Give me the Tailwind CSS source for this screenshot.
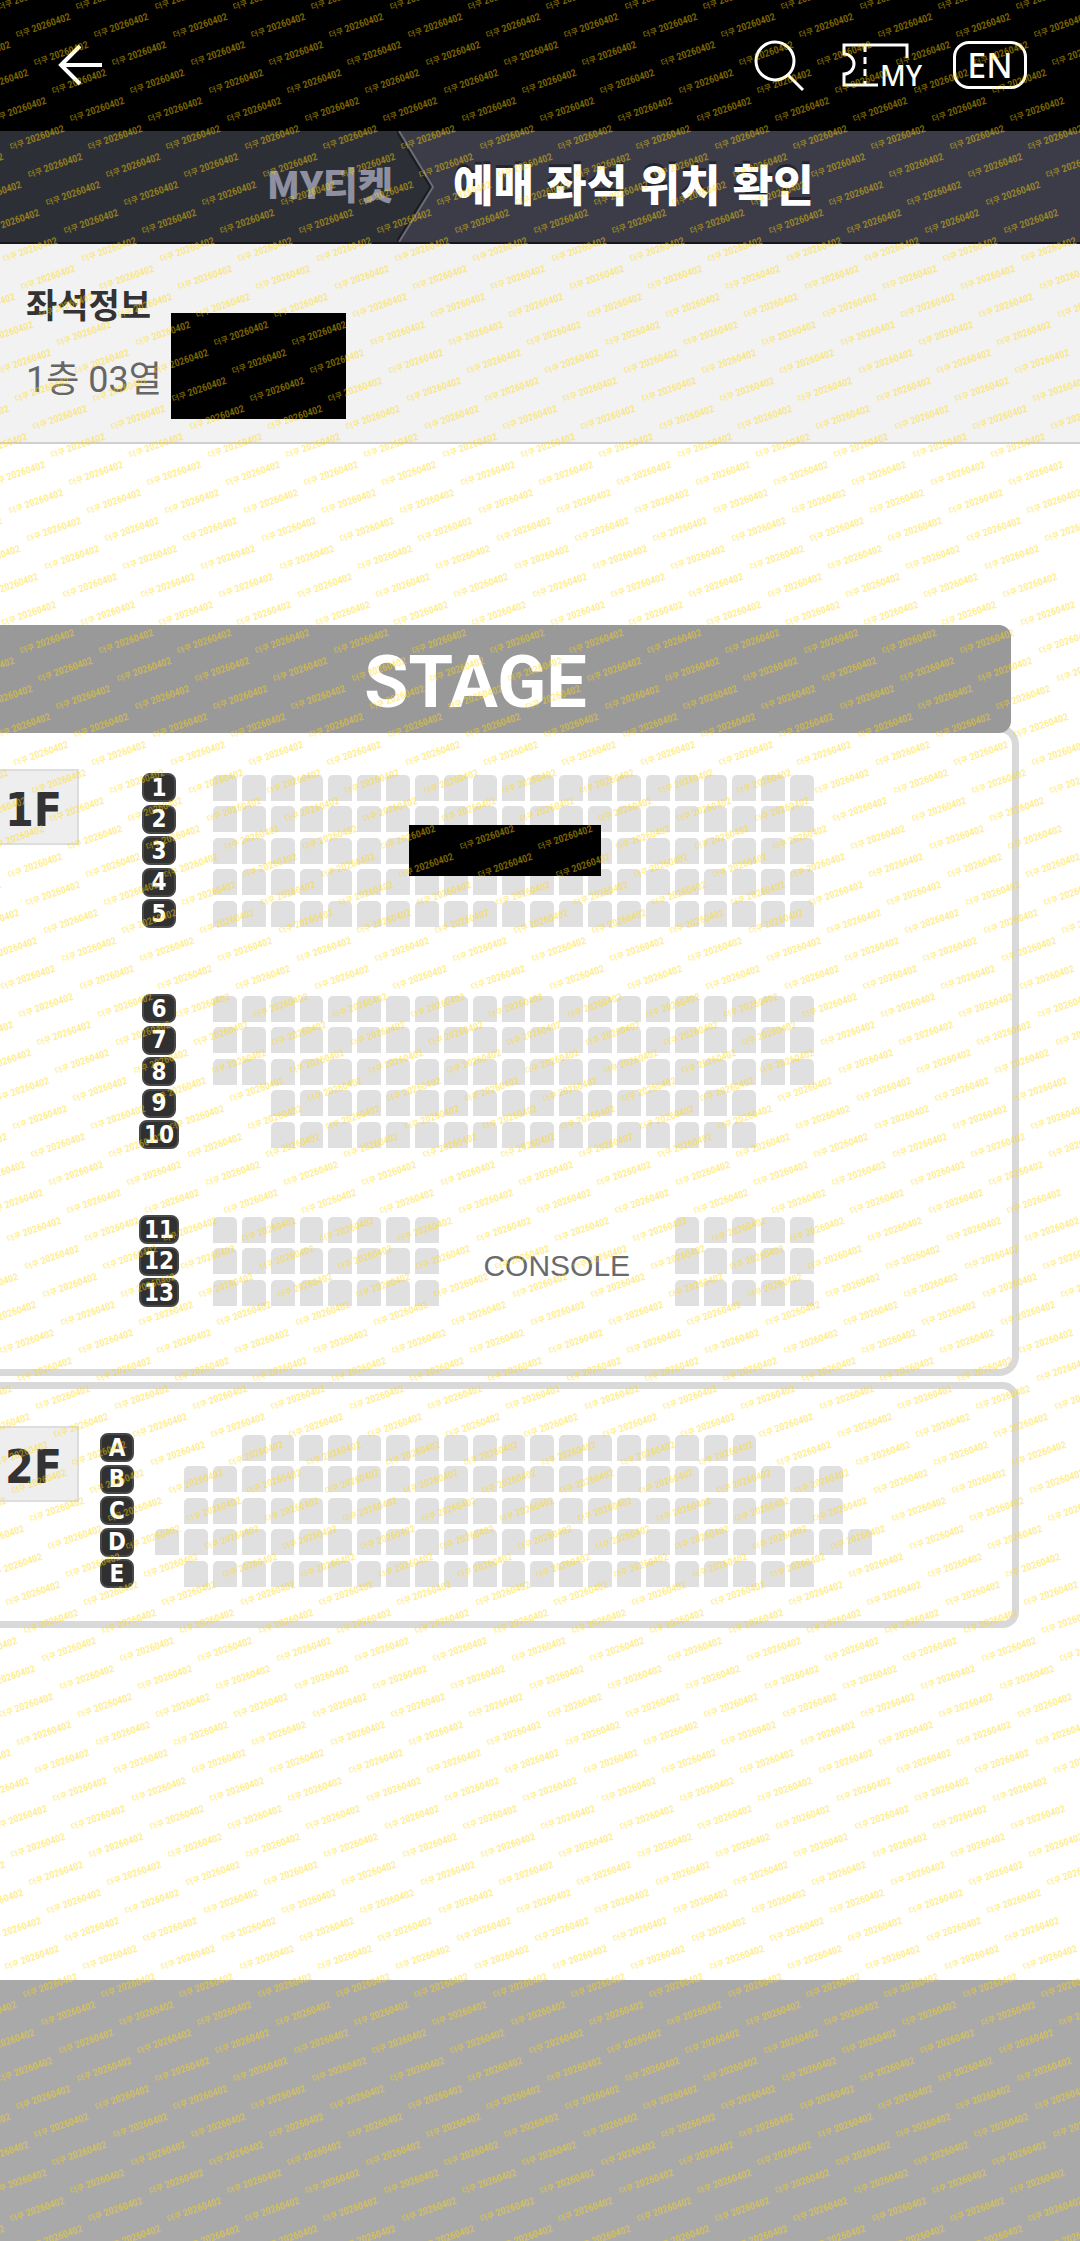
<!DOCTYPE html>
<html lang="ko">
<head>
  <meta charset="UTF-8" />
  <meta name="viewport" content="width=device-width, initial-scale=1.0"/>
  <title>예매 좌석 위치 확인</title>
  <script src="https://cdn.jsdelivr.net/npm/@tailwindcss/browser@4"></script>
</head>
<body class="relative min-h-screen flex flex-col overflow-x-hidden bg-white font-['Roboto','Noto_Sans_CJK_KR',sans-serif]">
  <header class="flex h-[131px] items-center justify-between bg-black pr-[53px] pb-[2px] pl-[56px] text-white">
    <button type="button" aria-label="뒤로">
      <svg class="h-[44px] w-[48px]" viewBox="0 0 48 44" fill="none" stroke="currentColor" stroke-width="4">
        <path d="M46 22H5M24 3 5 22l19 19" />
      </svg>
    </button>
    <div class="flex items-center">
      <button type="button" aria-label="검색">
        <svg class="h-[54px] w-[54px]" viewBox="0 0 54 54" fill="none" stroke="currentColor" stroke-width="3">
          <circle cx="21" cy="23" r="19" />
          <path d="M34 37l15 15" />
        </svg>
      </button>
      <a href="#" aria-label="MY 티켓" class="ml-[34px]">
        <svg class="h-[48px] w-[82px]" viewBox="0 0 82 48" fill="none" stroke="currentColor" stroke-width="3">
          <path d="M65 17V4H2v9a10 10 0 0 1 0 20v11h34" />
          <path d="M23 4v40" stroke-dasharray="7 5" />
          <text x="38" y="45" fill="currentColor" stroke="none" font-family="Noto Sans" font-size="28" font-weight="500">MY</text>
        </svg>
      </a>
      <button type="button" class="ml-[29px] flex h-[48px] w-[74px] items-center justify-center rounded-2xl border-3 border-white font-['Noto_Sans'] text-[34px] leading-none font-medium">EN</button>
    </div>
  </header>

  <nav class="relative flex h-[113px] items-center border-b-2 border-[#16161c] bg-[#2d2f36] font-['Noto_Sans_CJK_KR',sans-serif]">
    <a href="#" class="w-[397px] shrink-0 pr-[4px] pb-[8px] text-right text-[38px] leading-none font-black text-[#8e8fa0]">MY티켓</a>
    <svg class="h-full w-[38px] shrink-0" viewBox="0 0 38 111" preserveAspectRatio="none">
      <path d="M1 0 36 56 1 111h37V0z" fill="#3b3c48" />
      <path d="M0 0 34 56 0 111" fill="none" stroke="#1c1d22" stroke-width="3" />
      <path d="M2 0 36 56 2 111" fill="none" stroke="#6b6c76" stroke-width="2" />
    </svg>
    <h1 class="flex h-full flex-1 items-center bg-[#3b3c48] pb-[8px] pl-[18px] text-[44px] leading-none font-black text-white text-shadow-[0_-3px_0_#25262d]">예매 좌석 위치 확인</h1>
  </nav>

  <section class="flex h-[200px] items-start border-b-2 border-[#cfcfcf] bg-[#f2f2f2] pl-[26px]">
    <div class="w-[145px] pt-[38px] whitespace-nowrap">
      <h2 class="text-[34px] leading-[48px] font-bold text-[#333]">좌석정보</h2>
      <p class="mt-[26px] text-[36px] leading-[48px] text-[#666]">1층 03열</p>
    </div>
    <div class="mt-[69px] h-[106px] w-[175px] bg-black"></div>
  </section>

  <main class="flex-1 pt-[181px] pr-[61px] pb-[352px]">
    <div class="relative z-10 mr-[8px] flex h-[108px] items-center justify-center rounded-r-xl bg-[#999] pt-[8px] pr-[60px] text-[72px] leading-none font-bold text-white">STAGE</div>

    <section class="-mt-[8px] flex items-start rounded-r-[20px] border-[7px] border-l-0 border-[#d9d9d9] pt-[40px] pb-[61px]">
      <h2 class="-mt-[3px] w-[79px] border-2 border-l-0 border-[#ddd] bg-[#eee] pt-[6px] pr-[10px] text-center font-['DejaVu_Sans_Condensed','DejaVu_Sans',sans-serif] text-[46px] leading-[66px] font-bold text-[#333]">1F</h2>
      <div class="relative mr-[198px] ml-[60px] flex-1">
        <div id="floor1" class="flex flex-col gap-[64px]"></div>
        <div class="absolute top-[53px] left-[270px] h-[51px] w-[192px] bg-black"></div>
      </div>
    </section>

    <section class="mt-[6px] flex items-start rounded-r-[16px] border-[7px] border-l-0 border-[#d9d9d9] pt-[43px] pb-[32px]">
      <h2 class="-mt-[6px] w-[79px] border-2 border-l-0 border-[#ddd] bg-[#eee] pt-[6px] pr-[10px] text-center font-['DejaVu_Sans_Condensed','DejaVu_Sans',sans-serif] text-[46px] leading-[66px] font-bold text-[#333]">2F</h2>
      <div id="floor2" class="mr-[140px] ml-[21px] flex-1"></div>
    </section>
  </main>

  <footer class="h-[261px] bg-[#a9a9a9]"></footer>

  <svg id="watermark" aria-hidden="true" class="pointer-events-none absolute inset-0 z-20 h-full w-full fill-[#ffd800]/50 font-['Liberation_Sans_Narrow','Roboto_Condensed','Open_Sans_Condensed','Noto_Sans_CJK_KR',sans-serif] text-[8px] font-medium"></svg>

  <script>
    // each row: label, then [first, last] seat column ranges
    const floor1 = [
      [["1", [1, 21]], ["2", [1, 21]], ["3", [1, 21]], ["4", [1, 21]], ["5", [1, 21]]],
      [["6", [1, 21]], ["7", [1, 21]], ["8", [1, 21]], ["9", [3, 19]], ["10", [3, 19]]],
      [["11", [1, 8], [17, 21]], ["12", [1, 8], [17, 21]], ["13", [1, 8], [17, 21]]]
    ];
    const floor2 = [["A", [4, 21]], ["B", [2, 24]], ["C", [2, 24]], ["D", [1, 25]], ["E", [2, 23]]];

    function seats(ranges) {
      let html = "";
      ranges.forEach(([first, last]) => {
        for (let c = first; c <= last; c++) {
          html += `<span class="row-start-1 h-[26px] rounded-t-[5px] bg-[#e0e0e0]" style="grid-column:${c}"></span>`;
        }
      });
      return html;
    }

    function label(text) {
      const width = text.length > 1 ? "w-[40px]" : "w-[34px]";
      return `<span class="${width} flex h-[29px] items-center justify-center rounded-lg border-2 border-[#484848] bg-[#303030] font-['DejaVu_Sans_Condensed','DejaVu_Sans',sans-serif] text-[24px] leading-none font-bold text-white">${text}</span>`;
    }

    document.getElementById("floor1").innerHTML = floor1.map(block => `<div>${block.map(([name, ...ranges]) => `
      <div class="flex items-center odd:h-[31px] even:h-[32px]">
        <div class="mr-[34px] flex w-[40px] justify-center">${label(name)}</div>
        <div class="grid h-[26px] flex-1 grid-cols-21 grid-rows-1 items-center gap-[5px]">
          ${seats(ranges)}
          ${name === "12" ? `<span class="col-start-9 col-end-17 row-start-1 pt-[10px] text-center font-['Liberation_Sans'] text-[30px] leading-none text-[#6a6a6a]">CONSOLE</span>` : ""}
        </div>
      </div>`).join("")}</div>`).join("");

    document.getElementById("floor2").innerHTML = floor2.map(([name, ...ranges]) => `
      <div class="flex items-center gap-[21px] odd:h-[31px] even:h-[32px]">
        ${label(name)}
        <div class="grid flex-1 grid-cols-25 gap-[5px]">${seats(ranges)}</div>
      </div>`).join("");

    // watermark rows step 28px down and 18px right
    function drawWatermark() {
      const stepX = 235 / 3, stepY = 28;
      const w = document.body.clientWidth, h = document.body.scrollHeight;
      let html = "";
      for (let row = -1; row * stepY < h + stepY; row++) {
        const start = (17 + row * 18) % stepX - stepX;
        for (let x = start; x < w; x += stepX) {
          html += `<text transform="translate(${Math.round(x)} ${38 + row * stepY}) rotate(-19)">더쿠<tspan class="text-[10px]"> 20260402</tspan></text>`;
        }
      }
      document.getElementById("watermark").innerHTML = html;
    }
    drawWatermark();
    window.onresize = drawWatermark;
  </script>
</body>
</html>
